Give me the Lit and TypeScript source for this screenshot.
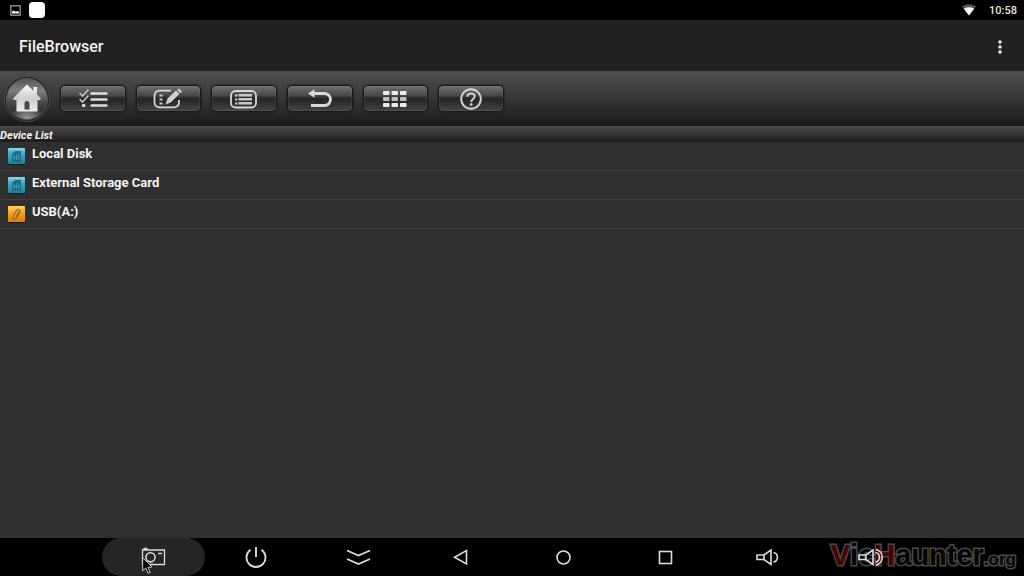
import { LitElement, html, css, svg } from "lit";
import { customElement } from "lit/decorators.js";

const tools = [
  {
    label: "Select",
    art: svg`<g fill="none" stroke="#c4c4c4" stroke-linecap="round"><path d="M13.500 2.500h15M13.500 8.500h15M13.500 14.500h15" stroke="#dedede" stroke-width="2.400"/><path d="M2 2.500l2.500 2.500L10-1M2 8.500L4.500 11 10 5" stroke-width="1.600"/></g><rect x="4" y="13" width="3.400" height="3" rx="1" fill="#dedede"/>`,
  },
  {
    label: "Edit",
    art: svg`<path d="M18 -.3H6.500a5 5 0 0 0-5 5v6.600a5 5 0 0 0 5 5H21a5 5 0 0 0 5-5V9" fill="none" stroke="#d8d8d8" stroke-width="1.800"/><path d="M6.500 3.500h3v2h-3zM6.500 7.500h3v2h-3zM6.500 11.500h3v2h-3z" fill="#ccc"/><path d="M12.500 13.500l2-6L23-.5l3.500 3.300-8.500 8.500zM24-1l2-1.600 3.300 3-2 1.600z" fill="#d0d0d0"/>`,
  },
  {
    label: "List",
    art: svg`<rect x="2" y="0" width="25" height="16.500" rx="4.500" fill="none" stroke="#d8d8d8" stroke-width="1.800"/><path d="M6 3.500h2.500v2H6zM6 7.500h2.500v2H6zM6 11.500h2.500v2H6zM9.500 3h13.500v2.600h-13.500zM9.500 7h13.500v2.600h-13.500zM9.500 11h13.500v2.600h-13.500z" fill="#c8c8c8"/>`,
  },
  {
    label: "Back",
    art: svg`<path d="M8 2.500h11.500a6 6 0 0 1 0 12H6" fill="none" stroke="#d8d8d8" stroke-width="2.800"/><path d="M3 2.500L9.500-1.800v8.600z" fill="#d8d8d8"/>`,
  },
  {
    label: "Grid view",
    art: svg`<g>${[0, 1, 2].map((r) => [0, 1, 2].map((c) => svg`<rect x=${3 + c * 8.5} y=${r * 6} width="6.500" height="4" rx="1" fill=${r === 1 ? "#c0c0c0" : "#ececec"}/>`))}</g>`,
  },
  {
    label: "Help",
    art: svg`<circle cx="15" cy="8" r="9.800" fill="none" stroke="#d4d4d4" stroke-width="1.900"/><path d="M11.400 5.800C11.400 3.500 13 2.600 15 2.600s3.700 1 3.700 2.900c0 2.300-3.500 2.800-3.500 5.400" fill="none" stroke="#ccc" stroke-width="2"/><circle cx="15.200" cy="13.400" r="1.300" fill="#ccc"/>`,
  },
];

const devices = [
  { name: "Local Disk", kind: "disk" },
  { name: "External Storage Card", kind: "disk" },
  { name: "USB(A:)", kind: "usb" },
];

const speaker = svg`<path d="M1 10h7l7-5v14.500l-7-5H1zM8 10v4.500"/><path d="M17.500 7.500a4.900 4.900 0 0 1 0 9.600"/>`;

const navs = [
  { label: "Screenshot", art: svg`<path d="M1.500 5h22v14.500h-22zM2.500 3.500h4M17 8.500h4" stroke-width="1.300"/><circle cx="9.500" cy="12.300" r="4.600"/>` },
  { label: "Power", art: svg`<path d="M13 2v10M7.500 4.800a9.500 9.500 0 1 0 11 0" stroke-width="1.900"/>` },
  { label: "Hide bar", art: svg`<path d="M1 5.500l11.500 5L24 5.500M1 14l11.500 5L24 14" stroke-width="1.900"/>` },
  { label: "Back", art: svg`<path d="M18.500 5.500v13.500l-12-6.700z"/>` },
  { label: "Home", art: svg`<circle cx="12.500" cy="12.500" r="6.500"/>` },
  { label: "Recent apps", art: svg`<rect x="6.500" y="6.500" width="12" height="12"/>` },
  { label: "Volume down", art: speaker },
  { label: "Volume up", art: svg`${speaker}<path d="M18 4.500a8 8 0 0 1 0 15.600"/>` },
];

@customElement("app-root")
export class AppRoot extends LitElement {
  static styles = css`
    :host {
      display: flex;
      flex-direction: column;
      min-height: 100vh;
      background: #2f2f2f;
      color: #f4f4f4;
      font-family: Roboto, "Open Sans", sans-serif;
      position: relative;
      overflow: hidden;
    }
    * { box-sizing: border-box; }
    button {
      border: 0;
      padding: 0;
      background: none;
      color: inherit;
      font: inherit;
      display: flex;
      align-items: center;
      justify-content: center;
    }
    svg { display: block; overflow: visible; flex: none; }
    .status {
      display: flex;
      align-items: center;
      gap: 8px;
      height: 20px;
      padding: 0 7px 0 10px;
      background: #000;
      font-size: 11px;
      line-height: 13px;
      font-weight: 500;
    }
    .app-tile { width: 16px; height: 16px; border-radius: 4px; background: #fff; }
    .wifi { margin-left: auto; }
    .clock { margin-left: 5px; color: #e6e6e6; }
    .title-bar {
      display: flex;
      align-items: center;
      justify-content: space-between;
      height: 51px;
      padding: 2px 14px 0 19px;
      background: #212121;
    }
    h1 { margin: 0; font-size: 16px; line-height: 20px; font-weight: 500; }
    .more { width: 20px; height: 32px; }
    .toolbar {
      display: flex;
      align-items: center;
      gap: 10px;
      height: 55px;
      padding: 0 4px;
      background: linear-gradient(#4e4e4e, #393939 45%, #1c1c1c 96%, #191919);
    }
    .home { width: 46px; height: 46px; border-radius: 50%; }
    .tools {
      display: grid;
      grid-template-columns: repeat(6, 1fr);
      gap: 10px;
      width: 444px;
    }
    .tool {
      height: 27px;
      border: 1px solid #191919;
      border-radius: 5px;
      background: linear-gradient(#707070, #484848 38%, #262626 50%, #2c2c2c 65%, #444);
      box-shadow: inset 0 0 0 1px #ffffff10, 0 0 1px 1px #1d1d1d88;
    }
    h2 {
      margin: 0;
      height: 16px;
      background: linear-gradient(#4a4a4a, #1c1c1c);
      font-size: 11px;
      line-height: 19px;
      font-weight: 700;
      font-style: italic;
    }
    .devices { list-style: none; margin: 0; padding: 0; flex: 1; }
    .device {
      width: 100%;
      height: 29px;
      padding: 0 8px;
      gap: 7px;
      justify-content: flex-start;
      align-items: flex-start;
      border-bottom: 1px solid #404040;
      font-size: 13px;
      line-height: 23px;
      font-weight: 700;
    }
    .device svg { margin-top: 6px; }
    .nav {
      display: grid;
      grid-template-columns: repeat(8, 1fr);
      height: 38px;
      padding: 0 10%;
      background: #000;
    }
    .nav button { height: 38px; border-radius: 19px; }
    .nav .active { background: #252525; }
    .nav svg { position: relative; z-index: 1; fill: none; stroke: #dcdcdc; stroke-width: 1.6; }
    .watermark {
      position: absolute;
      right: 8px;
      bottom: 0;
      font-family: "Liberation Sans", Arial, sans-serif;
      font-size: 29px;
      line-height: 32px;
      font-weight: 700;
      color: #050505;
      -webkit-text-stroke: 3px #484848;
      paint-order: stroke fill;
      pointer-events: none;
    }
    .watermark b { color: #4c0000; }
    .watermark small { font-size: 17px; }
    .pointer { position: absolute; z-index: 2; left: calc(10% + 40px); bottom: 2px; }
  `;

  private deviceIcon(kind: string) {
    return html`<svg width="17" height="17" viewBox="0 0 17 17" aria-hidden="true">
      <defs>
        <linearGradient id="blue" x2="0" y2="1"><stop stop-color="#8ed9e9"/><stop offset=".3" stop-color="#49aeca"/><stop offset="1" stop-color="#16849f"/></linearGradient>
        <linearGradient id="gold" x2="0" y2="1"><stop stop-color="#ffd264"/><stop offset=".45" stop-color="#f4a02a"/><stop offset="1" stop-color="#e77e00"/></linearGradient>
      </defs>
      <rect y="1" width="17" height="16" rx="2" fill="#151515"/>
      <rect width="17" height="16" rx="1" fill=${kind === "usb" ? "url(#gold)" : "url(#blue)"}/>
      ${kind === "usb"
        ? svg`<path d="M4 12.500L6 7l3-4 3.500.500v2.500L9.500 12 6 14.500z" fill="#a5691c"/><path d="M6 12.500L9 6l2-1.500" fill="none" stroke="#efb04e" stroke-width="1.300"/>`
        : svg`<path d="M4 6l3-3h6v11H4z" fill="#1b6d86"/><path d="M6 7v5M8.500 6v6M11 6v6M5 9.500h7" stroke="#4296ae"/>`}
    </svg>`;
  }

  render() {
    return html`
      <header class="status">
        <svg width="11" height="11" viewBox="0 0 11 11" aria-hidden="true"><rect x=".8" y=".8" width="9.400" height="9.400" fill="none" stroke="#999" stroke-width="1.300"/><path d="M2 8.500V6.500L4 5.500l1.500 1.300L7.500 6 9 7v1.500z" fill="#fff"/></svg>
        <span class="app-tile"></span>
        <svg class="wifi" width="14" height="12" viewBox="0 0 14 12" aria-hidden="true"><path d="M0 2.500Q7-2 14 2.500L7 11.500z" fill="#555"/><path d="M1.800 4.700Q7 2 12.200 4.700L7 11.500z" fill="#fff"/></svg>
        <time class="clock">10:58</time>
      </header>
      <div class="title-bar">
        <h1>FileBrowser</h1>
        <button class="more" aria-label="More options"><svg width="4" height="14" viewBox="0 0 4 14" fill="#f2f2f2"><circle cx="2" cy="2" r="1.700"/><circle cx="2" cy="7" r="1.700"/><circle cx="2" cy="12" r="1.700"/></svg></button>
      </div>
      <div class="toolbar">
        <button class="home" aria-label="Home">
          <svg width="46" height="46" viewBox="0 0 46 46">
            <defs>
              <linearGradient id="ball" x2="0" y2="1"><stop stop-color="#555"/><stop offset=".3" stop-color="#808080"/><stop offset=".55" stop-color="#4f4f4f"/><stop offset=".75" stop-color="#333"/><stop offset="1" stop-color="#444"/></linearGradient>
              <radialGradient id="glow" cy="1" r=".4"><stop stop-color="#999"/><stop offset="1" stop-color="#999" stop-opacity="0"/></radialGradient>
              <linearGradient id="house" x2="0" y2="1"><stop stop-color="#fff"/><stop offset=".5" stop-color="#cecece"/><stop offset="1" stop-color="#ececec"/></linearGradient>
            </defs>
            <circle cx="23" cy="23" r="22.500" fill="#222" stroke="#4b4b4b"/>
            <circle cx="23" cy="23" r="20.500" fill="url(#ball)" stroke="#555"/>
            <circle cx="23" cy="23" r="20" fill="url(#glow)"/>
            <path d="M23 8.500L9 22.500l1 1.500h2.500v11.500h21V24H36l1-1.500-4-4V11h-3.500v4z" fill="url(#house)"/>
            <path d="M20.500 33.500v-6a2.500 2.500 0 0 1 5 0v6z" fill="#484848"/>
          </svg>
        </button>
        <div class="tools">
          ${tools.map((t) => html`<button class="tool" aria-label=${t.label}><svg width="30" height="16" viewBox="0 0 30 16">${t.art}</svg></button>`)}
        </div>
      </div>
      <h2>Device List</h2>
      <ul class="devices">
        ${devices.map((d) => html`<li><button class="device">${this.deviceIcon(d.kind)}<span>${d.name}</span></button></li>`)}
      </ul>
      <nav class="nav">
        ${navs.map((n, i) => html`<button class=${i === 0 ? "active" : ""} aria-label=${n.label}><svg width="25" height="25" viewBox="0 0 25 25">${n.art}</svg></button>`)}
      </nav>
      <div class="watermark"><b>V</b>ic<b>H</b>aunter<small>.org</small></div>
      <svg class="pointer" width="11" height="17" viewBox="0 0 11 17" aria-hidden="true"><path d="M.7.7v13l3-2.700 2.300 5.300 2.200-1-2.300-5 4-.3z" fill="#000" stroke="#ccc"/></svg>
    `;
  }
}
